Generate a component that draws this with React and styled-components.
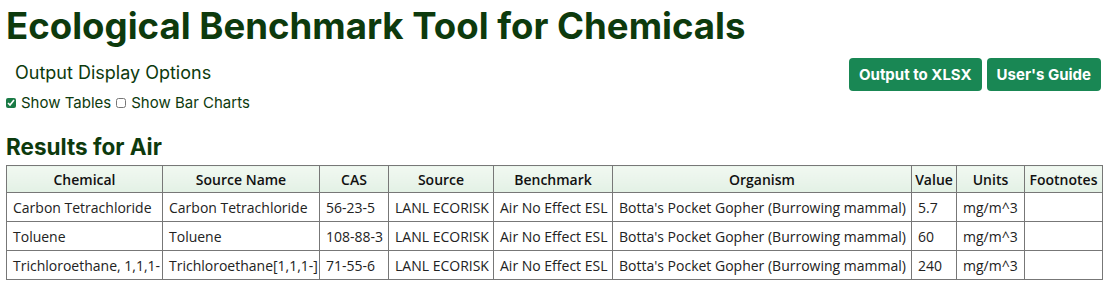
import React, { useState } from 'react';
import styled, { createGlobalStyle } from 'styled-components';

const GlobalStyle = createGlobalStyle`
    body {
        margin: 0;
        background: #fff;
        font-family: Inter, "Liberation Sans", sans-serif;
    }
`;

const Page = styled.div`
    padding: 0 10px 0 6px;
`;

const Title = styled.h1`
    margin: 0;
    padding-top: 4px;
    font-size: 36.6px;
    font-weight: 700;
    line-height: 44px;
    color: #0d3a0d;
`;

const Toolbar = styled.div`
    display: flex;
    justify-content: space-between;
    align-items: flex-start;
    margin-top: 10px;
`;

const Options = styled.div`
    display: flex;
    flex-direction: column;
`;

const OptionsTitle = styled.div`
    margin-top: 5px;
    padding-left: 9px;
    font-size: 18px;
    line-height: 20px;
    color: #0d3a0d;
`;

const CheckRow = styled.div`
    display: flex;
    align-items: center;
    margin-top: 11px;
    font-size: 15px;
    line-height: 18px;
    color: #0d3a0d;
`;

const CheckLabel = styled.label`
    display: flex;
    align-items: center;
    margin-right: 5px;
    cursor: pointer;
`;

const Box = styled.input`
    width: 10px;
    height: 10px;
    margin: 0 5px 0 0;
    accent-color: #1a7a45;
`;

const Buttons = styled.div`
    display: flex;
    gap: 5px;
`;

const Button = styled.button`
    height: 33px;
    padding: 0 10px;
    border: none;
    border-radius: 4px;
    background: #198754;
    color: #fff;
    font-family: Inter, "Liberation Sans", sans-serif;
    font-size: 15px;
    font-weight: 700;
    cursor: pointer;
`;

const Section = styled.h2`
    margin: 21px 0 0;
    font-size: 22.5px;
    font-weight: 700;
    line-height: 28px;
    color: #0d3a0d;
`;

const Table = styled.table`
    margin-top: 4px;
    width: 1096px;
    table-layout: fixed;
    border-collapse: collapse;
    font-family: "Open Sans", "Noto Sans", sans-serif;
    font-size: 14px;
    color: #222;
`;

const Th = styled.th`
    box-sizing: border-box;
    height: 27px;
    padding: 0 2px;
    border: 1px solid #777;
    background: linear-gradient(#f1f8f1, #e3f1e5);
    font-weight: 600;
    color: #111;
    text-align: center;
    white-space: nowrap;
    width: ${(p) => p.$w}px;
`;

const Td = styled.td`
    height: 28px;
    padding: 0 6px;
    border: 1px solid #777;
    white-space: nowrap;
`;

const columns = [
    ['Chemical', 156],
    ['Source Name', 157],
    ['CAS', 69],
    ['Source', 105],
    ['Benchmark', 119],
    ['Organism', 299],
    ['Value', 45],
    ['Units', 68],
    ['Footnotes', 78],
];

const rows = [
    ['Carbon Tetrachloride', 'Carbon Tetrachloride', '56-23-5', '5.7'],
    ['Toluene', 'Toluene', '108-88-3', '60'],
    ['Trichloroethane, 1,1,1-', 'Trichloroethane[1,1,1-]', '71-55-6', '240'],
];

const App = () => {
    const [showTables, setShowTables] = useState(true);
    const [showCharts, setShowCharts] = useState(false);

    return (
        <Page>
            <GlobalStyle />
            <Title>Ecological Benchmark Tool for Chemicals</Title>
            <Toolbar>
                <Options>
                    <OptionsTitle>Output Display Options</OptionsTitle>
                    <CheckRow>
                        <CheckLabel>
                            <Box type="checkbox" checked={showTables} onChange={() => setShowTables(!showTables)} />
                            Show Tables
                        </CheckLabel>
                        <CheckLabel>
                            <Box type="checkbox" checked={showCharts} onChange={() => setShowCharts(!showCharts)} />
                            Show Bar Charts
                        </CheckLabel>
                    </CheckRow>
                </Options>
                <Buttons>
                    <Button>Output to XLSX</Button>
                    <Button>User's Guide</Button>
                </Buttons>
            </Toolbar>
            <Section>Results for Air</Section>
            <Table>
                <thead>
                    <tr>
                        {columns.map(([name, w]) => (
                            <Th key={name} $w={w}>{name}</Th>
                        ))}
                    </tr>
                </thead>
                <tbody>
                    {rows.map(([chem, src, cas, value]) => (
                        <tr key={cas}>
                            <Td>{chem}</Td>
                            <Td>{src}</Td>
                            <Td>{cas}</Td>
                            <Td>LANL ECORISK</Td>
                            <Td>Air No Effect ESL</Td>
                            <Td>Botta's Pocket Gopher (Burrowing mammal)</Td>
                            <Td>{value}</Td>
                            <Td>mg/m^3</Td>
                            <Td></Td>
                        </tr>
                    ))}
                </tbody>
            </Table>
        </Page>
    );
};

export default App;
